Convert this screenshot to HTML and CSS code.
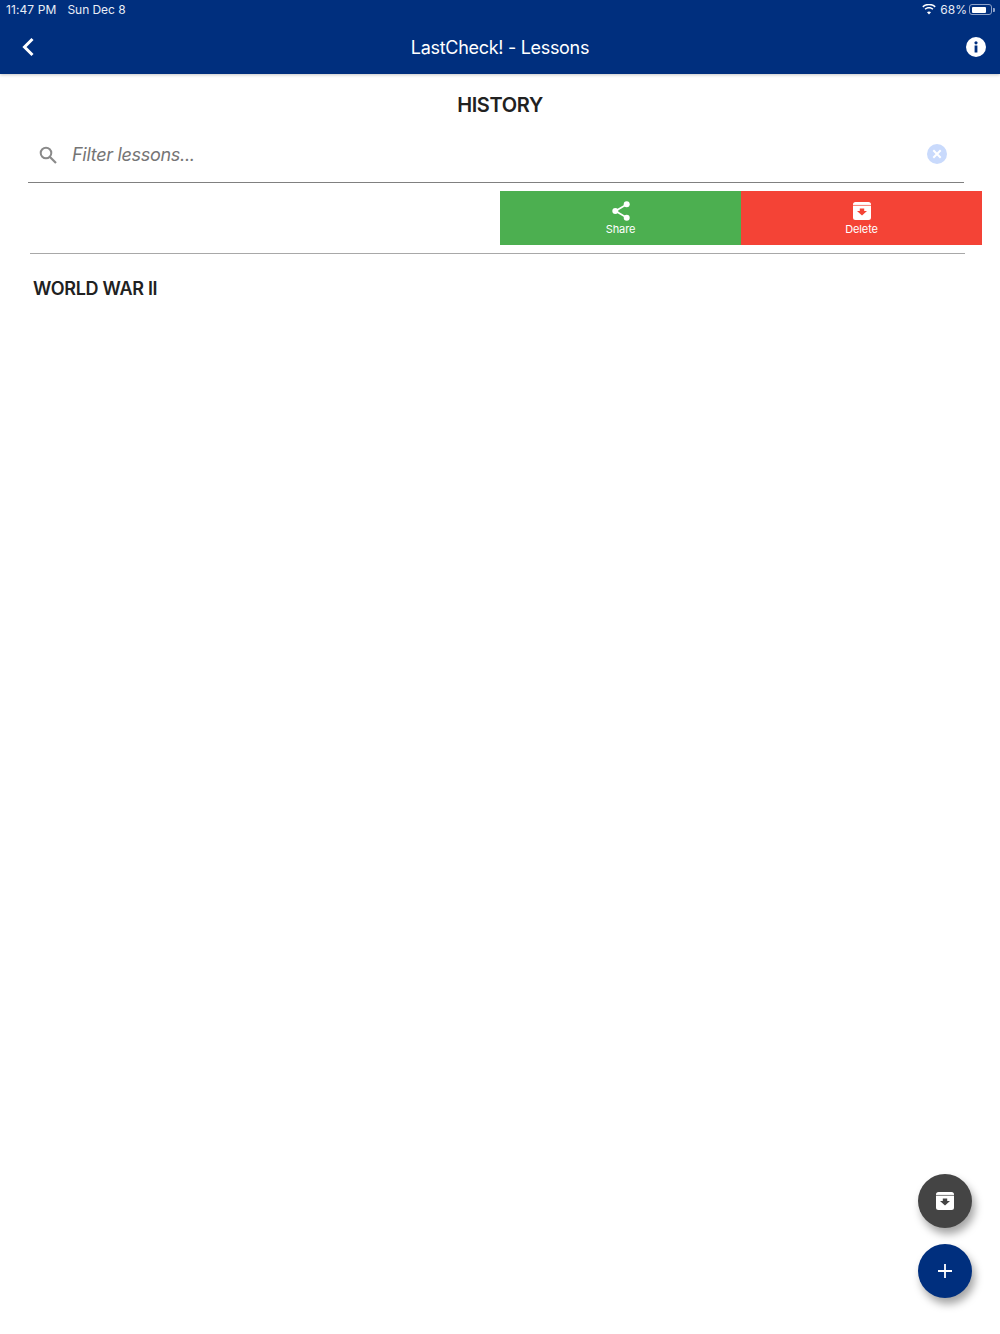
FILE: index.html
```html
<!DOCTYPE html>
<html lang="en">
<head>
<meta charset="utf-8">
<title>LastCheck! - Lessons</title>
<link rel="stylesheet" href="styles.css">
</head>
<body>
<header class="appbar">
  <div class="status">
    <span class="status-time">11:47 PM</span>
    <span class="status-date">Sun Dec 8</span>
    <span class="status-right">
      <svg class="wifi" width="14" height="11" viewBox="0 0 14 11"><path fill="#fff" d="M7 1.2c2.2 0 4.2.8 5.7 2.2l1-1.1C11.900.600 9.500-.3 7-.3S2.100.600.300 2.300l1 1.100C2.800 2 4.800 1.200 7 1.200zM7 4.500c1.300 0 2.500.500 3.400 1.300l1-1.100C10.200 3.600 8.700 3 7 3s-3.200.6-4.400 1.700l1 1.100C4.500 5 5.700 4.500 7 4.500zM7 7.500c-.8 0-1.500.3-2 .8L7 10.500l2-2.200c-.5-.5-1.200-.8-2-.8z"/></svg>
      <span class="status-pct">68%</span>
      <span class="battery"><span class="battery-fill"></span></span>
      <span class="battery-tip"></span>
    </span>
  </div>
  <div class="toolbar">
    <svg class="back" width="14" height="20" viewBox="0 0 14 20"><path d="M11.500 2 3.500 10l8 8" fill="none" stroke="#fff" stroke-width="3"/></svg>
    <h1 class="title">LastCheck! - Lessons</h1>
    <svg class="info" width="20" height="20" viewBox="0 0 20 20"><circle cx="10" cy="10" r="10" fill="#fff"/><circle cx="10" cy="5.800" r="1.600" fill="#002f7e"/><rect x="8.600" y="8.500" width="2.800" height="7" fill="#002f7e"/></svg>
  </div>
</header>
<main class="content">
  <h2 class="subject">HISTORY</h2>
  <div class="search">
    <svg class="search-icon" width="18" height="18" viewBox="0 0 18 18"><circle cx="7" cy="7" r="5.300" fill="none" stroke="#8a8a8a" stroke-width="2"/><path d="M11 11l6 6" stroke="#8a8a8a" stroke-width="2.200"/></svg>
    <span class="search-placeholder">Filter lessons...</span>
    <svg class="clear" width="20" height="20" viewBox="0 0 20 20"><circle cx="10" cy="10" r="10" fill="#c9dafc"/><path d="M6.300 6.300l7.400 7.400M13.700 6.300l-7.400 7.400" stroke="#fff" stroke-width="2"/></svg>
  </div>
  <div class="actions">
    <div class="action action-share">
      <svg class="action-icon" width="20" height="20" viewBox="0 0 20 20"><path d="M15.500 3.500 4.500 10l11 6.500" fill="none" stroke="#fff" stroke-width="1.700"/><circle cx="15.700" cy="3.300" r="3" fill="#fff"/><circle cx="4.300" cy="10" r="3" fill="#fff"/><circle cx="15.700" cy="16.700" r="3" fill="#fff"/></svg>
      <span class="action-label">Share</span>
    </div>
    <div class="action action-delete">
      <svg class="action-icon" width="20" height="20" viewBox="-1 -1 20 20"><path d="M2.500 0h13A2.500 2.500 0 0 1 18 2.500v13a2.500 2.500 0 0 1-2.500 2.500h-13A2.500 2.500 0 0 1 0 15.500v-13A2.500 2.500 0 0 1 2.500 0z" fill="#fff"/><path d="M0 3.400h18" stroke="#f44336" stroke-width=".7"/><path d="M6.800 6.500h4.400v2.500h2.800L9 13.500 4 9h2.800z" fill="#f44336"/></svg>
      <span class="action-label">Delete</span>
    </div>
  </div>
  <div class="lesson">WORLD WAR II</div>
</main>
<button class="fab fab-archive" type="button" aria-label="Archive">
  <svg width="18" height="18" viewBox="0 0 18 18"><path d="M2.500 0h13A2.500 2.500 0 0 1 18 2.500v13a2.500 2.500 0 0 1-2.500 2.500h-13A2.500 2.500 0 0 1 0 15.500v-13A2.500 2.500 0 0 1 2.500 0z" fill="#fff"/><path d="M0 3.400h18" stroke="#444" stroke-width=".7"/><path d="M6.800 6.500h4.400v2.500h2.800L9 13.500 4 9h2.800z" fill="#444"/></svg>
</button>
<button class="fab fab-add" type="button" aria-label="Add">
  <svg width="14" height="14" viewBox="0 0 14 14"><path d="M7 0v14M0 7h14" stroke="#fff" stroke-width="1.800"/></svg>
</button>
</body>
</html>
```
FILE: styles.css
```css
* { box-sizing: border-box; }
html, body { margin: 0; height: 100%; }
body {
  background: #fff;
  font-family: Inter, "Liberation Sans", sans-serif;
  color: #212121;
  overflow: hidden;
}
.appbar {
  height: 74px;
  background: #002f7e;
  color: #fff;
  box-shadow: 0 1px 3px rgba(0, 0, 0, .22);
}
.status {
  height: 19px;
  padding: 0 5px 0 6px;
  display: flex;
  align-items: center;
  font-size: 12px;
  letter-spacing: .1px;
  color: #e8edf6;
}
.status-date { margin-left: 11px; letter-spacing: -.05px; }
.status-right { margin-left: auto; display: flex; align-items: center; }
.wifi { margin-right: 1px; }
.status-pct { margin-left: 3px; font-size: 12px; letter-spacing: 0; }
.battery {
  width: 23px;
  height: 11px;
  margin-left: 2px;
  padding: 1.500px;
  border: 1px solid #8fa3c9;
  border-radius: 3px;
  display: block;
}
.battery-fill { display: block; width: 14px; height: 100%; background: #fff; border-radius: 1px; }
.battery-tip { width: 2px; height: 4px; margin-left: 1px; background: #8fa3c9; border-radius: 0 1px 1px 0; }
.toolbar {
  height: 55px;
  padding: 0 14px 0 21px;
  display: flex;
  align-items: center;
  justify-content: space-between;
}
.title {
  margin: 1px 0 0 -1px;
  font-size: 18px;
  font-weight: 400;
  letter-spacing: -.3px;
}
.content { padding: 0 18px 0 28px; }
.subject {
  margin: 20px -18px 0 -28px;
  height: 23px;
  line-height: 23px;
  text-align: center;
  font-size: 20px;
  font-weight: 600;
  letter-spacing: -.35px;
}
.search {
  width: 936px;
  height: 66px;
  padding: 10px 17px 0 11px;
  display: flex;
  align-items: center;
  border-bottom: 1px solid #808080;
}
.search-placeholder {
  margin-left: 15px;
  flex: 1;
  font-size: 18px;
  font-style: italic;
  letter-spacing: -.3px;
  color: #757575;
}
.clear { margin-top: -1px; }
.actions {
  width: 935px;
  height: 71px;
  margin: 0 0 0 2px;
  padding: 8px 0 8px 470px;
  display: flex;
  border-bottom: 1px solid #a8a8a8;
  overflow: visible;
}
.action {
  flex: none;
  width: 241px;
  height: 54px;
  padding-top: 10px;
  display: flex;
  flex-direction: column;
  align-items: center;
  color: #fff;
}
.action-share { background: #4caf50; }
.action-delete { background: #f44336; }
.action-icon { display: block; flex: none; }
.action-label { margin-top: 1px; font-size: 11px; line-height: 14px; letter-spacing: -.1px; }
.lesson {
  margin: 24px 0 0 5px;
  font-size: 18px;
  line-height: 22px;
  font-weight: 600;
  letter-spacing: -.3px;
}
.fab {
  position: fixed;
  left: 918px;
  width: 54px;
  height: 54px;
  padding: 0;
  border: 0;
  border-radius: 50%;
  display: flex;
  align-items: center;
  justify-content: center;
  box-shadow: 3px 6px 9px rgba(0, 0, 0, .36);
}
.fab-archive { top: 1174px; background: #444; }
.fab-add { top: 1244px; background: #002f7e; }
```
